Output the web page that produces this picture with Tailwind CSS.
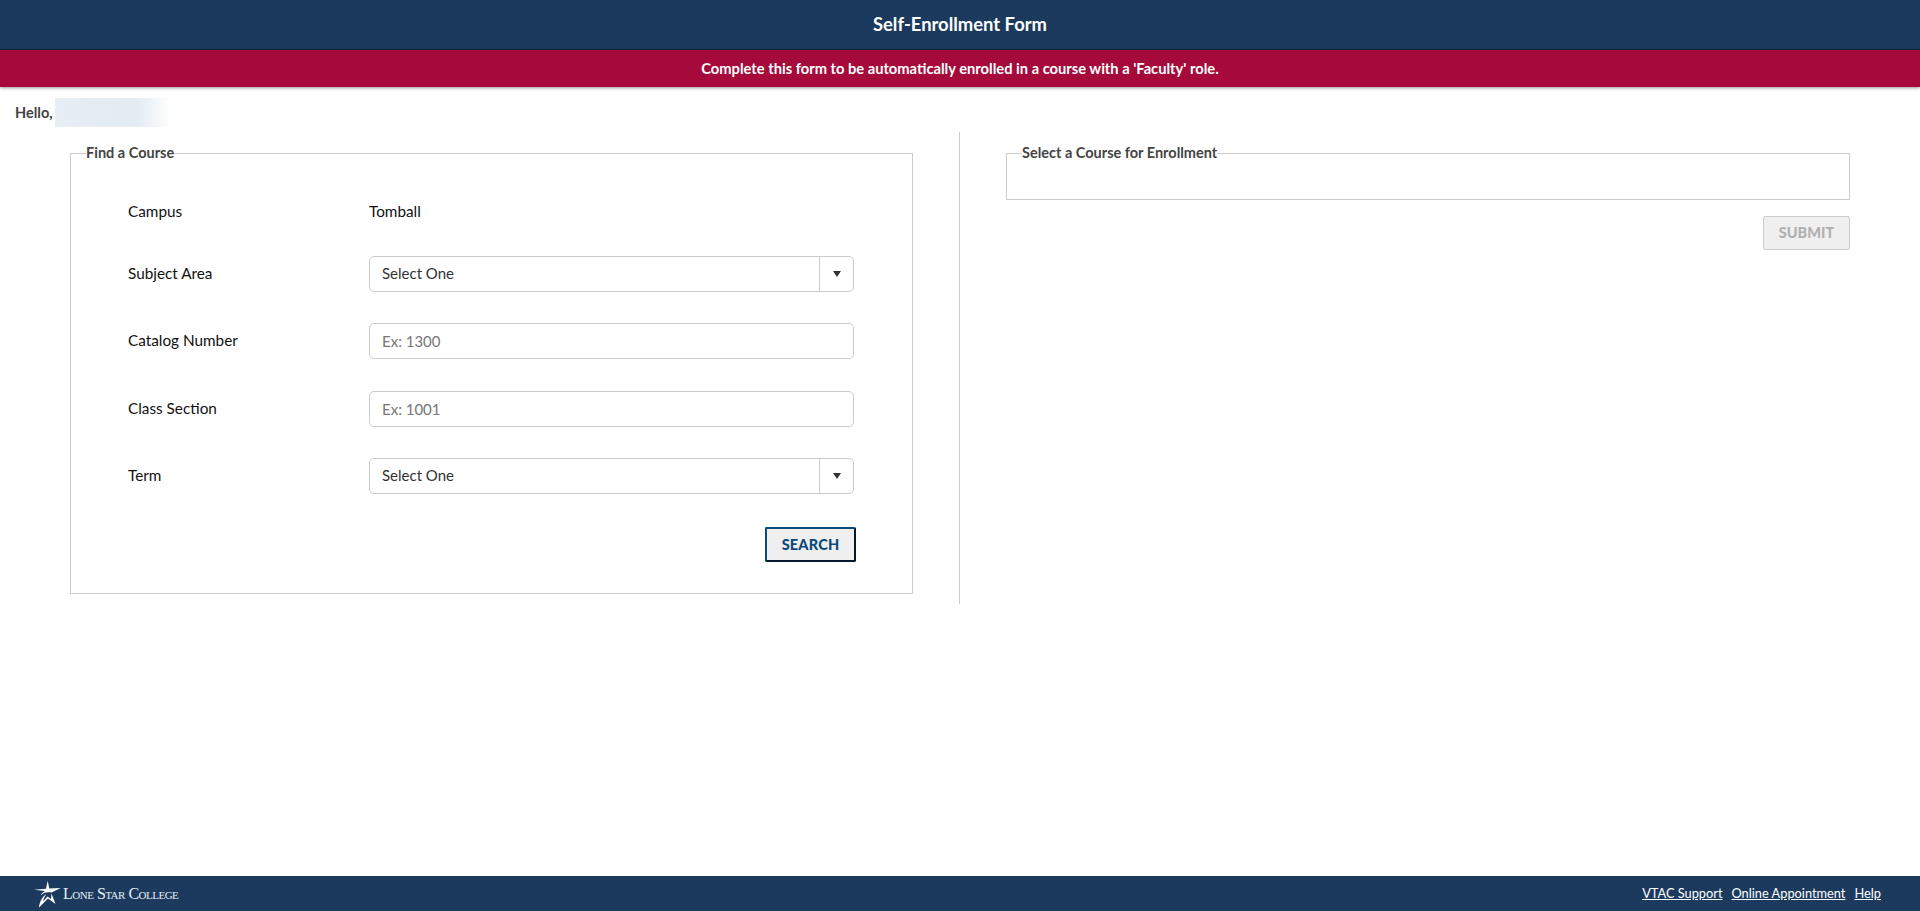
<!DOCTYPE html>
<html lang="en">
<head>
    <meta charset="UTF-8">
    <meta name="viewport" content="width=device-width, initial-scale=1.0">
    <title>Self-Enrollment Form</title>
    <script src="https://cdn.jsdelivr.net/npm/@tailwindcss/browser@4"></script>
</head>
<body class="bg-white h-[911px] flex flex-col overflow-hidden font-['Lato','Noto_Sans',sans-serif] text-[15.3px] text-[#111]">
    <header class="h-[50px] shrink-0 bg-[#1b3a5d] flex items-center justify-center border-b border-[#14283f]">
        <h1 class="text-white text-[18.4px] font-bold">Self-Enrollment Form</h1>
    </header>
    <div class="h-[37px] shrink-0 bg-[#a60a3a] flex items-center justify-center shadow-[0_1px_3px_rgba(0,0,0,0.4)]">
        <p class="text-white text-[14.7px] font-bold">Complete this form to be automatically enrolled in a course with a 'Faculty' role.</p>
    </div>

    <main class="flex-1">
        <div class="h-[45px] pl-[15px] pt-[6px] flex items-center">
            <span class="font-bold text-[#444] text-[14.5px] w-[40px]">Hello,</span>
            <span class="w-[116px] h-[29px] bg-linear-to-r from-[#e7eef5] via-[#e3ebf3] via-70% to-white"></span>
        </div>

        <div class="flex">
            <section class="w-[960px] h-[472px] pl-[70px] pr-[46px] pt-[13px] border-r border-[#ccc]">
                <fieldset class="border border-[#ccc] h-[449px] pl-[15px]">
                    <legend class="font-bold text-[#444] text-[14.5px] leading-[16px]">Find a Course</legend>
                    <div class="pl-[42px] pr-[58px] pt-[32px] flex flex-col">
                        <div class="flex items-center h-[36px]">
                            <label class="w-[241px]">Campus</label>
                            <span>Tomball</span>
                        </div>
                        <div class="flex items-center h-[36px] mt-[27px]">
                            <label class="w-[241px] -mt-[1px]">Subject Area</label>
                            <div class="flex-1 h-[36px] flex border border-[#ccc] rounded-[5px]">
                                <select class="flex-1 appearance-none pl-[12px] pb-[2px] text-[15px] text-[#333] outline-none">
                                    <option>Select One</option>
                                </select>
                                <span class="w-[34px] flex items-center justify-center border-l border-[#ccc]">
                                    <svg width="8" height="6" viewBox="0 0 8 6"><polygon points="0,0 8,0 4,6" fill="#333"/></svg>
                                </span>
                            </div>
                        </div>
                        <div class="flex items-center h-[36px] mt-[31px]">
                            <label class="w-[241px] -mt-[1px]">Catalog Number</label>
                            <input type="text" placeholder="Ex: 1300" class="flex-1 h-[36px] border border-[#ccc] rounded-[5px] pl-[12px] text-[15px] outline-none placeholder:text-[#777]">
                        </div>
                        <div class="flex items-center h-[36px] mt-[32px]">
                            <label class="w-[241px] -mt-[1px]">Class Section</label>
                            <input type="text" placeholder="Ex: 1001" class="flex-1 h-[36px] border border-[#ccc] rounded-[5px] pl-[12px] text-[15px] outline-none placeholder:text-[#777]">
                        </div>
                        <div class="flex items-center h-[36px] mt-[31px]">
                            <label class="w-[241px] -mt-[1px]">Term</label>
                            <div class="flex-1 h-[36px] flex border border-[#ccc] rounded-[5px]">
                                <select class="flex-1 appearance-none pl-[12px] pb-[2px] text-[15px] text-[#333] outline-none">
                                    <option>Select One</option>
                                </select>
                                <span class="w-[34px] flex items-center justify-center border-l border-[#ccc]">
                                    <svg width="8" height="6" viewBox="0 0 8 6"><polygon points="0,0 8,0 4,6" fill="#333"/></svg>
                                </span>
                            </div>
                        </div>
                        <div class="flex justify-end mt-[33px] -mr-[2px]">
                            <button class="w-[91px] h-[35px] bg-[#efefef] border-2 border-t-[#0a4a7c] border-l-[#0a4a7c] border-r-[#04192b] border-b-[#04192b] rounded-[2px] text-[#0a4a7c] font-black text-[14.5px] tracking-[0.2px]">SEARCH</button>
                        </div>
                    </div>
                </fieldset>
            </section>

            <section class="flex-1 pl-[46px] pr-[70px] pt-[13px]">
                <fieldset class="border border-[#ccc] h-[55px] pl-[15px]">
                    <legend class="font-bold text-[#444] text-[14.5px] leading-[16px]">Select a Course for Enrollment</legend>
                </fieldset>
                <div class="flex justify-end mt-[16px]">
                    <button disabled class="w-[87px] h-[34px] bg-[#efefef] border border-[#ccc] rounded-[2px] text-[#b0b0b0] font-black text-[14.5px]">SUBMIT</button>
                </div>
            </section>
        </div>
    </main>

    <footer class="h-[35px] shrink-0 bg-[#1b3a5d] flex items-center justify-between pl-[34px] pr-[39px]">
        <div class="flex items-center gap-[2px]">
            <svg width="27" height="28" viewBox="0 0 27 28" fill="none">
                <path d="M13.7 .7 L15.3 8.6 L26.7 8 L17.5 12.6 C13 11.5 9.5 12.5 6.5 15.5 C8 13 9.5 11.8 11 11 L0 9.7 L12 8.8 Z" fill="#fff"/>
                <path d="M17.5 13.5 L21.5 24 L14 18.5 L5 27.5 C5.5 21.5 8.5 16.5 12.5 14 C10.5 16.5 9.5 19 9 21.5 L13.5 16.5 L17 19 Z" fill="#fff"/>
            </svg>
            <span class="text-[#e8edf2] text-[16px] tracking-[-0.5px] font-['Liberation_Serif',serif] [font-variant:small-caps] whitespace-nowrap">Lone Star College</span>
        </div>
        <nav class="flex gap-[9px] text-white text-[12.8px]">
            <a href="#" class="underline">VTAC Support</a>
            <a href="#" class="underline">Online Appointment</a>
            <a href="#" class="underline">Help</a>
        </nav>
    </footer>
</body>
</html>
